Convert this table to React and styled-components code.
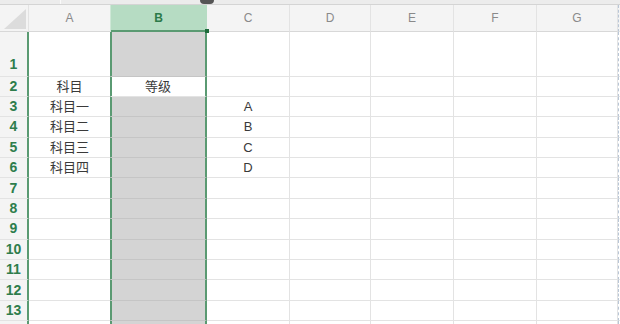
import React from "react";
import styled, { createGlobalStyle } from "styled-components";

const GlobalStyle = createGlobalStyle`
  *, *::before, *::after {
    box-sizing: border-box;
  }
  html, body {
    margin: 0;
    padding: 0;
    background: #ffffff;
    overflow: hidden;
  }
  body {
    font-family: "Liberation Sans", "Noto Sans CJK SC", sans-serif;
  }
`;

const GREEN = "#5a9a72";
const GRID = "#e3e3e3";

const columns = [
  { key: "A", width: 82 },
  { key: "B", width: 96, selected: true },
  { key: "C", width: 83 },
  { key: "D", width: 81 },
  { key: "E", width: 83 },
  { key: "F", width: 83 },
  { key: "G", width: 81 },
];

// 表格内容
const data = {
  2: { A: "科目", B: "等级" },
  3: { A: "科目一", C: "A" },
  4: { A: "科目二", C: "B" },
  5: { A: "科目三", C: "C" },
  6: { A: "科目四", C: "D" },
};

const rows = Array.from({ length: 13 }, (_, i) => i + 1);

export default function App() {
  return (
    <>
      <GlobalStyle />
      <Page>
        <TopStrip>
          <StripDivider />
          <StripKnob />
        </TopStrip>
        <Sheet
          $cols={`29px ${columns.map((c) => c.width + "px").join(" ")} 1fr`}
          $rows={`27px 44.5px repeat(${rows.length - 1}, 20.4px) 10px`}
        >
          <Corner>
            <CornerTriangle />
          </Corner>
          {columns.map((c) => (
            <ColHeader key={c.key} $selected={c.selected} $beforeSel={c.key === "A"}>
              {c.key}
              {c.selected && <Handle />}
            </ColHeader>
          ))}
          <Edge $header />
          {[...rows, null].map((r, i) => (
            <React.Fragment key={i}>
              <RowHeader $tall={r === 1}>{r}</RowHeader>
              {columns.map((c) => (
                <Cell
                  key={c.key}
                  $selected={c.selected}
                  $active={c.selected && r === 2}
                  $beforeSel={c.key === "A"}
                >
                  {(r && data[r]?.[c.key]) || ""}
                </Cell>
              ))}
              <Edge />
            </React.Fragment>
          ))}
        </Sheet>
      </Page>
    </>
  );
}

const Page = styled.div`
  width: 620px;
  height: 324px;
  overflow: hidden;
  background: #fff;
`;

const TopStrip = styled.div`
  height: 5px;
  background: #ececec;
  border-bottom: 1px solid #d4d4d4;
  display: flex;
  align-items: flex-start;
`;

const StripDivider = styled.div`
  width: 1px;
  height: 4px;
  margin-left: 60px;
  background: #fafafa;
`;

const StripKnob = styled.div`
  width: 14px;
  height: 4px;
  margin-left: 139px;
  background: #555;
  border-radius: 0 0 7px 7px;
`;

const Sheet = styled.div`
  display: grid;
  grid-template-columns: ${(p) => p.$cols};
  grid-template-rows: ${(p) => p.$rows};
`;

const Corner = styled.div`
  background: #f4f4f4;
  border-right: 1px solid ${GRID};
  border-bottom: 1px solid #d8d8d8;
  position: relative;
  overflow: hidden;
`;

const CornerTriangle = styled.div`
  position: absolute;
  right: 2px;
  bottom: 2px;
  width: 0;
  height: 0;
  border-left: 22px solid transparent;
  border-bottom: 20px solid #dcdcdc;
`;

const ColHeader = styled.div`
  position: relative;
  display: flex;
  align-items: center;
  justify-content: center;
  font-size: 12px;
  background: ${(p) => (p.$selected ? "#b6dcc3" : "#f4f4f4")};
  color: ${(p) => (p.$selected ? "#2c7a49" : "#8a8a8a")};
  font-weight: ${(p) => (p.$selected ? 700 : 400)};
  border-right: 1px solid ${(p) => (p.$selected ? "#b6dcc3" : p.$beforeSel ? "#cfe8d7" : GRID)};
  border-bottom: ${(p) => (p.$selected ? `2px solid ${GREEN}` : "1px solid #d8d8d8")};
  z-index: ${(p) => (p.$selected ? 1 : 0)};
`;

const Handle = styled.span`
  position: absolute;
  right: -3px;
  bottom: -3px;
  width: 4px;
  height: 4px;
  background: #1f6b3c;
`;

const RowHeader = styled.div`
  display: flex;
  align-items: ${(p) => (p.$tall ? "flex-end" : "center")};
  justify-content: center;
  padding-bottom: ${(p) => (p.$tall ? "2px" : "0")};
  font-size: 14px;
  line-height: 19px;
  font-weight: 700;
  color: #2e7d4c;
  background: #f4f4f4;
  border-right: 2px solid ${GREEN};
  border-bottom: 1px solid ${GRID};
`;

const Cell = styled.div`
  display: flex;
  align-items: center;
  justify-content: center;
  font-size: 13px;
  line-height: 19px;
  color: #3a3a3a;
  background: ${(p) => (p.$active ? "#ffffff" : p.$selected ? "#d4d4d4" : "#ffffff")};
  border-bottom: 1px solid ${(p) => (p.$selected && !p.$active ? "#c5c5c5" : GRID)};
  border-right: ${(p) =>
    p.$selected ? `2px solid ${GREEN}` : p.$beforeSel ? `1px solid ${GREEN}` : `1px solid ${GRID}`};
  box-shadow: ${(p) => (p.$selected ? `inset 1px 0 0 ${GREEN}` : "none")};
`;

const Edge = styled.div`
  border-left: 1px dashed #b9c6d6;
  border-bottom: 1px solid ${GRID};
  background: ${(p) => (p.$header ? "#f4f4f4" : "#fff")};
`;
